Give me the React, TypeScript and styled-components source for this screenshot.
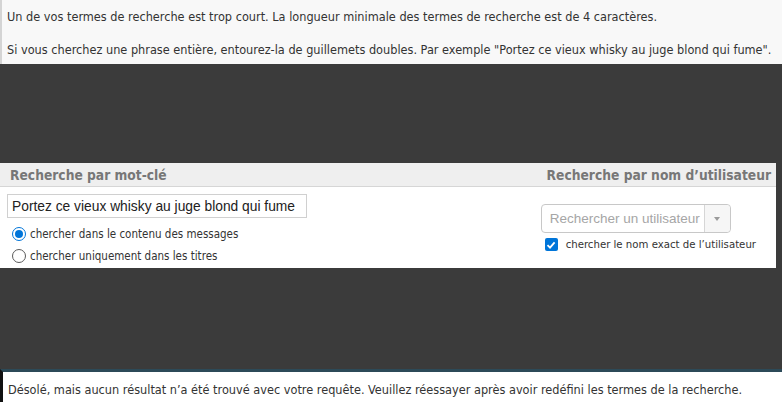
import React from "react";
import styled, {createGlobalStyle} from "styled-components";

const GlobalStyle = createGlobalStyle`
    html, body {
        margin: 0;
        padding: 0;
        background: #3b3b3b;
    }

    body {
        width: 782px;
        height: 402px;
        overflow: hidden;
        font-family: "DejaVu Sans Condensed", "DejaVu Sans", sans-serif;
    }
`

const Page = styled.div`
    display: flex;
    flex-direction: column;
    height: 402px;
`

const Notice = styled.div`
    background: #f8f8f8;
    border-left: 2px solid #d4d4d4;
    padding: 9px 5px 7px;
    font-size: 12.6px;
    color: #333;
    white-space: nowrap;

    p {
        margin: 0;
        line-height: 15px;
    }

    p + p {
        margin-top: 18px;
    }
`

const Spacer = styled.div<{ h: number }>`
    height: ${props => props.h}px;
    flex-shrink: 0;
`

const SearchPanel = styled.div`
    width: 776px;
    background: #fff;
`

const PanelHeader = styled.div`
    display: flex;
    justify-content: space-between;
    align-items: center;
    height: 23px;
    padding: 0 5px 0 10px;
    background: #efefef;
    border-bottom: 1px solid #d6d6d6;
    font-weight: bold;
    font-size: 13.7px;
    color: #777;
`

const PanelBody = styled.div`
    display: flex;
    justify-content: space-between;
    padding: 7px 20px 1px 7px;
`

const Column = styled.div`
    display: flex;
    flex-direction: column;
`

const TextInput = styled.input`
    width: 300px;
    height: 24px;
    box-sizing: border-box;
    border: 1px solid #d0d0d0;
    padding: 0 4px;
    font-family: "Liberation Sans", Arial, sans-serif;
    font-size: 13.8px;
    color: #222;
    outline: none;
    margin-bottom: 5px;
`

const OptionLabel = styled.label`
    display: flex;
    align-items: center;
    gap: 3px;
    font-size: 11.5px;
    color: #333;
    height: 22px;
    line-height: 14px;
`

const Radio = styled.span<{ checked?: boolean }>`
    width: 14px;
    height: 14px;
    box-sizing: border-box;
    border-radius: 50%;
    border: 1px solid ${props => props.checked ? "#0075d9" : "#5a5a5a"};
    background: #fff;
    display: inline-flex;
    align-items: center;
    justify-content: center;
    margin: 0 1px 0 5px;

    &::after {
        content: "";
        width: 8px;
        height: 8px;
        border-radius: 50%;
        background: ${props => props.checked ? "#0075d9" : "transparent"};
    }
`

const UserSelect = styled.div`
    display: flex;
    width: 190px;
    height: 29px;
    box-sizing: border-box;
    border: 1px solid #c8c8c8;
    border-radius: 4px;
    margin-top: 10px;
    margin-left: -4px;
    background: #fff;
    font-family: "Liberation Sans", Arial, sans-serif;
    font-size: 13.5px;
    color: #a6a6a6;
`

const SelectText = styled.div`
    flex: 1;
    display: flex;
    align-items: center;
    padding-left: 8px;
    white-space: nowrap;
`

const SelectArrow = styled.div`
    width: 25px;
    border-left: 1px solid #d6d6d6;
    display: flex;
    align-items: center;
    justify-content: center;
    background: #f6f6f6;
    border-radius: 0 4px 4px 0;

    &::after {
        content: "";
        border-left: 3px solid transparent;
        border-right: 3px solid transparent;
        border-top: 4px solid #9a9a9a;
    }
`

const CheckRow = styled.label`
    display: flex;
    align-items: center;
    gap: 8px;
    margin: 5px 0 0 0;
    font-size: 11.3px;
    color: #333;
`

const CheckBox = styled.span`
    width: 13px;
    height: 13px;
    border-radius: 2px;
    background: #0075d9;
    display: inline-flex;
    align-items: center;
    justify-content: center;
`

const ResultBox = styled.div`
    width: 774px;
    background: #fff;
    border-top: 3px solid #2c4a58;
    border-left: 3px solid #111;
    padding: 10px 5px 7px;
    font-size: 12.6px;
    line-height: 15px;
    color: #333;
    white-space: nowrap;
`

export default function App() {
    return (
        <Page>
            <GlobalStyle/>
            <Notice>
                <p>Un de vos termes de recherche est trop court. La longueur minimale des termes de recherche est de 4 caractères.</p>
                <p>Si vous cherchez une phrase entière, entourez-la de guillemets doubles. Par exemple "Portez ce vieux whisky au juge blond qui fume".</p>
            </Notice>
            <Spacer h={99}/>
            <SearchPanel>
                <PanelHeader>
                    <span>Recherche par mot-clé</span>
                    <span>Recherche par nom d’utilisateur</span>
                </PanelHeader>
                <PanelBody>
                    <Column>
                        <TextInput readOnly value="Portez ce vieux whisky au juge blond qui fume"/>
                        <OptionLabel><Radio checked/>chercher dans le contenu des messages</OptionLabel>
                        <OptionLabel><Radio/>chercher uniquement dans les titres</OptionLabel>
                    </Column>
                    <Column>
                        <UserSelect>
                            <SelectText>Rechercher un utilisateur</SelectText>
                            <SelectArrow/>
                        </UserSelect>
                        <CheckRow>
                            <CheckBox>
                                <svg width="10" height="10" viewBox="0 0 10 10">
                                    <path d="M1.5 5.2 L4 7.6 L8.6 2.4" fill="none" stroke="#fff" strokeWidth="1.8"/>
                                </svg>
                            </CheckBox>
                            chercher le nom exact de l’utilisateur
                        </CheckRow>
                    </Column>
                </PanelBody>
            </SearchPanel>
            <Spacer h={101}/>
            <ResultBox>
                Désolé, mais aucun résultat n’a été trouvé avec votre requête. Veuillez réessayer après avoir redéfini les termes de la recherche.
            </ResultBox>
        </Page>
    );
}
